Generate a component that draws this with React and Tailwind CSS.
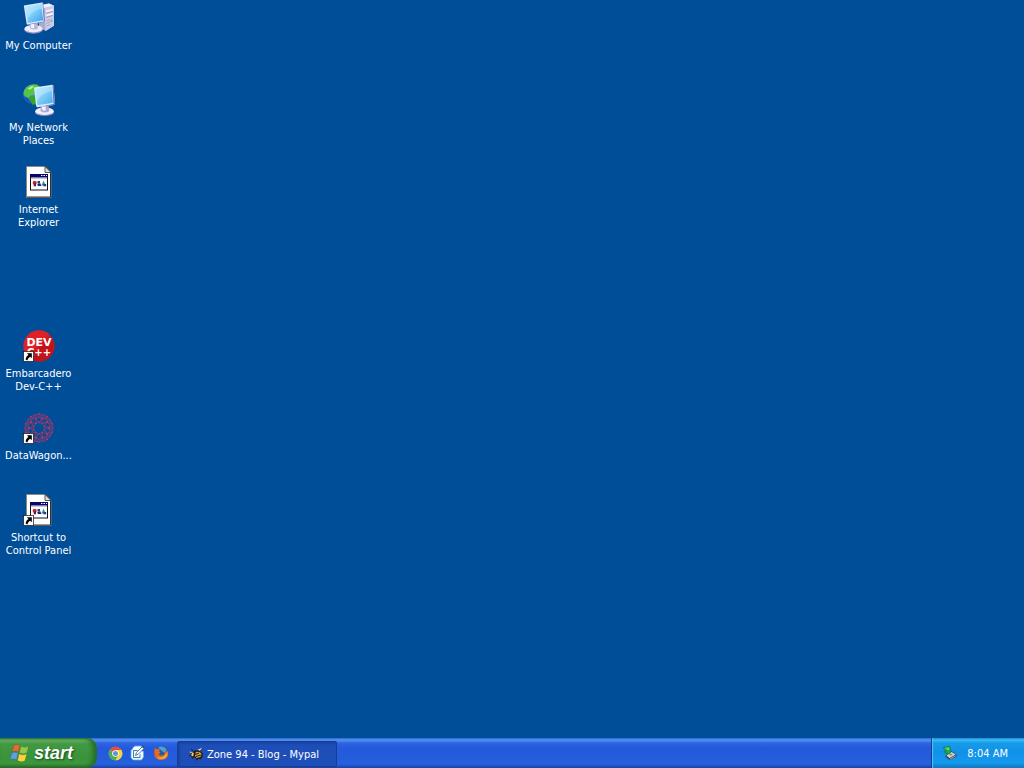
import React from "react";

const font = "font-['DejaVu_Sans_Condensed','DejaVu_Sans',sans-serif]";

function Arrow() {
  return (
    <g>
      <rect x="0.5" y="21.5" width="10" height="10" fill="#fff" stroke="#111" strokeWidth="0.7" />
      <path d="M3.9 23.300h4.900v4.900L7.200 26.700C5.600 27.700 4.800 28.800 4.500 30.400L2.600 29.500C2.900 27.400 3.900 26.100 5.500 25z" fill="#000" />
    </g>
  );
}

function ComputerIcon() {
  return (
    <svg width="32" height="32" viewBox="0 0 32 32" aria-hidden="true">
      <defs>
        <linearGradient id="pcScreen" x1="0" y1="0" x2="1" y2="1">
          <stop offset="0" stopColor="#b4eaff" />
          <stop offset="0.5" stopColor="#78cbfa" />
          <stop offset="1" stopColor="#399fe9" />
        </linearGradient>
      </defs>
      <path d="M16 3.500L26 1.500l5 2.200v20L22.500 29 16 25z" fill="#a9aace" />
      <path d="M16 3.500L26 1.500l5 2.200-9.200 2.200z" fill="#f2f1fb" />
      <path d="M21.800 5.900L31 3.700v20L22.500 29z" fill="#cecce5" />
      <path d="M23 8.500l7-1.800v2.200l-7 1.900zM23 12.500l7-1.900v2.200l-7 2z" fill="#efeffb" />
      <path d="M23 11.300l7-1.900M23 15.400l7-2" stroke="#8588b5" strokeWidth="0.8" fill="none" />
      <path d="M23.300 19l4-1.400M23.300 21.500l4-1.500M23.300 24l4-1.500" stroke="#9294bb" strokeWidth="0.7" />
      <circle cx="28.500" cy="19" r="1" fill="#78ad91" />
      <ellipse cx="10.500" cy="27.800" rx="9.300" ry="3.900" fill="#8d8fc5" />
      <ellipse cx="10.500" cy="26.700" rx="9.100" ry="3.700" fill="#eeeaf8" />
      <path d="M6.500 20l8-.5.500 7c-2 1.300-5.500 1.300-7.800 0z" fill="#b9b6dc" />
      <path d="M7.500 21l3.500-.3.200 5.500-3-.3z" fill="#f4f3ff" />
      <path d="M.8 3.500L19 .4c.7 0 1 .3 1.100 1L22 18.800c0 .8-.3 1.200-1 1.400L5 22.800c-.8 0-1.200-.3-1.400-1z" fill="#dae8f8" />
      <path d="M19.500.5l.6.900L22 18.800l-1 1.400L5 22.800l-1-.4 16.800-3z" fill="#6078b5" />
      <path d="M2.300 4.900L18.300 2l1.900 16.200L4.900 20.900z" fill="url(#pcScreen)" />
      <path d="M2.300 4.900L18.300 2l.5 4.800C13 7.500 7.800 11 4.500 17.500z" fill="#c9f2ff" opacity="0.4" />
    </svg>
  );
}

function NetworkIcon() {
  return (
    <svg width="32" height="32" viewBox="0 0 32 32" aria-hidden="true">
      <defs>
        <radialGradient id="globe" cx="0.35" cy="0.3" r="0.8">
          <stop offset="0" stopColor="#a8d8ff" />
          <stop offset="0.5" stopColor="#2f78d8" />
          <stop offset="1" stopColor="#0c3390" />
        </radialGradient>
        <linearGradient id="netScreen" x1="0" y1="0" x2="1" y2="1">
          <stop offset="0" stopColor="#b3eaff" />
          <stop offset="1" stopColor="#48aaf0" />
        </linearGradient>
      </defs>
      <circle cx="10.500" cy="10.500" r="10.300" fill="url(#globe)" />
      <path d="M1.500 6C5 .8 10 0 14 .6L17 3l-4 2-1 4-4 2-2 3-4-1-1.400-4z" fill="#55c642" />
      <path d="M6.500 12l5-1 3 2.500-1 6.800-4 .5-2.500-4.300z" fill="#31a52e" />
      <path d="M4.500 4.500L9 2l2 .7-4 3z" fill="#b4f49a" />
      <path d="M1 12c.7 3 2.500 5.500 5 7l-1-5z" fill="#1a53b5" />
      <ellipse cx="21.500" cy="28.700" rx="9.500" ry="3.200" fill="#8a88c3" />
      <ellipse cx="21.500" cy="27.200" rx="9.300" ry="3.700" fill="#f1eef9" />
      <path d="M17.500 20.500l8-.5.700 7.300c-2.400 1.600-6 1.600-8.500 0z" fill="#aaa8d4" />
      <path d="M18.500 21.500l4-.4.300 5.500-3.300-.2z" fill="#f5f2ff" />
      <path d="M11 3.600L29.500.8l1 .8 1.500 18-1 1.300L14.300 23.200l-1.200-1z" fill="#dceaf9" />
      <path d="M30.500 1.600l1.500 18-1 1.300-16.700 2.300 16.200-3.200L29.500.8z" fill="#5273b3" />
      <path d="M12.500 5L28.600 2.500l1.300 16.300L14.500 21.300z" fill="url(#netScreen)" />
      <path d="M12.500 5L28.600 2.500l.4 4.600C23.500 8 17.500 11 14.100 17z" fill="#d4f5ff" opacity="0.4" />
    </svg>
  );
}

function PageIcon({ shortcut }) {
  return (
    <svg width="32" height="32" viewBox="0 0 32 32" aria-hidden="true">
      <path d="M3.500.5h18.500l6 6V31.500H3.500z" fill="#fff" stroke="#87836f" strokeWidth="0.8" />
      <path d="M27.500 6.500V31H4" fill="none" stroke="#35332d" strokeWidth="1" />
      <path d="M22 .5v6h6z" fill="#e5e2d5" stroke="#35332d" strokeWidth="0.8" />
      <rect x="7.500" y="8.500" width="17" height="15.500" fill="#fff" stroke="#111" />
      <rect x="7" y="8" width="18" height="3.500" fill="#070767" />
      <path d="M18 9.500h1.500M20.500 9.500H22M23 9.500h1" stroke="#fff" />
      <path d="M8 12.500h16" stroke="#c8c5d0" />
      <circle cx="11.700" cy="16.800" r="2.100" fill="#d12b2b" />
      <path d="M10.800 17.300h2.200v3h-2.200z" fill="#601d46" />
      <path d="M14.500 15h2.500v2.500h-2.500z" fill="#1d3e9d" />
      <path d="M14.300 18l3-.7 1.300 2.800h-3.800z" fill="#22266f" />
      <path d="M18.500 19.500L20.500 14.500l2.300 5z" fill="#2aa173" />
      <path d="M20.300 18h2.900v2.300h-2.900z" fill="#273b9b" />
      {shortcut && <Arrow />}
    </svg>
  );
}

function DevIcon() {
  return (
    <svg width="32" height="32" viewBox="0 0 32 32" aria-hidden="true">
      <defs>
        <linearGradient id="devRed" x1="0" y1="0" x2="1" y2="1">
          <stop offset="0.45" stopColor="#df2025" />
          <stop offset="0.55" stopColor="#c2131a" />
        </linearGradient>
      </defs>
      <circle cx="16" cy="16" r="15.700" fill="url(#devRed)" />
      <text x="16" y="16" textAnchor="middle" fontFamily="DejaVu Sans, sans-serif" fontWeight="700" fontSize="11" fill="#fff">DEV</text>
      <text x="16" y="26" textAnchor="middle" fontFamily="DejaVu Sans, sans-serif" fontWeight="700" fontSize="10" fill="#fff">C++</text>
      <Arrow />
    </svg>
  );
}

function WagonIcon() {
  const spokes = [0, 36, 72, 108, 144, 180, 216, 252, 288, 324];
  return (
    <svg width="32" height="32" viewBox="0 0 32 32" aria-hidden="true">
      <g fill="none" stroke="#a93566" strokeWidth="0.7" opacity="0.85">
        <circle cx="16" cy="16" r="5.500" />
        {spokes.map((a) => (
          <g key={a} transform={`rotate(${a} 16 16)`}>
            <path d="M16 10.500L12.800 6.600 16 2l3.200 4.600zM12.800 6.600L11.700 2.500 16 2l4.300.5M12.800 6.600L16 5l3.200 1.600M12.800 11.600l0-5M11.700 2.500L16 5l4.300-2.500" />
            <circle cx="16" cy="2" r="0.800" fill="#d43b55" stroke="none" />
            <circle cx="12.800" cy="6.600" r="0.900" fill="#e33d4e" stroke="none" />
            <circle cx="16" cy="10.500" r="0.800" fill="#d43b55" stroke="none" />
          </g>
        ))}
      </g>
      <Arrow />
    </svg>
  );
}

function WindowsFlag() {
  return (
    <svg width="20" height="20" viewBox="0 0 20 20" aria-hidden="true">
      <g stroke="#24602a" strokeWidth="0.3">
        <path d="M3.800 2.500C6 1 8 1 9.900 2.500L8.300 9C6.300 7.700 4.200 7.900 2 9.200z" fill="#f26532" />
        <path d="M10.900 3.100c2.600 1.500 5 1.500 7.800 0l-1.700 6.700c-2.600 1.500-5 1.300-7.700-.1z" fill="#91ca48" />
        <path d="M1.700 10.100c2.500-1.300 4.500-1.300 6.500 0L6.500 17c-2.200-1.400-4.300-1.300-6.500 0z" fill="#609ced" />
        <path d="M9.100 10.700c2.600 1.500 5 1.500 7.700 0L15 17.700c-2.600 1.500-5 1.300-7.600-.1z" fill="#fbd43b" />
      </g>
    </svg>
  );
}

function ChromeIcon() {
  return (
    <svg width="16" height="16" viewBox="0 0 16 16" aria-hidden="true">
      <circle cx="8.500" cy="8.500" r="6.800" fill="#f8d346" />
      <path d="M8.500 8.500L2.600 5.100A6.800 6.800 0 0 1 14.400 5.100z" fill="#e54b3f" />
      <path d="M8.500 8.500L2.600 5.100A6.800 6.800 0 0 0 8.500 15.300l3-5.300z" fill="#4aad58" />
      <path d="M8.500 5.100h5.900A6.800 6.800 0 0 1 8.500 15.300l3-5.200z" fill="#f8d346" />
      <circle cx="8.500" cy="8.500" r="3.300" fill="#fff" />
      <circle cx="8.500" cy="8.500" r="2.500" fill="#6193d9" />
    </svg>
  );
}

function ShowDesktopIcon() {
  return (
    <svg width="16" height="16" viewBox="0 0 16 16" aria-hidden="true">
      <path d="M3 2.500L5 1h6l1 1.500-1 3 2.500 1V12l-2 3H3l-2-2.500v-7L2.500 4z" fill="#f4fbff" stroke="#62a9e5" strokeWidth="0.8" />
      <path d="M3.500 5.500h4M3.500 5.500v7h6.500V9.500" fill="none" stroke="#397caf" />
      <path d="M5.500 10.500l1-3L12.500 1.500l2 1.500-6 6z" fill="#fff" stroke="#27618e" strokeWidth="0.8" />
      <path d="M12 1.500l2.500 1.800" stroke="#184d80" strokeWidth="1.300" />
    </svg>
  );
}

function FirefoxIcon() {
  return (
    <svg width="16" height="16" viewBox="0 0 16 16" aria-hidden="true">
      <circle cx="8.500" cy="8" r="6.800" fill="#235b9e" />
      <path d="M5 2.500C8 .5 12 2 13.500 4.500L12 8 9 6z" fill="#4aa2cd" />
      <path d="M2 2.700l2 1.800c1.500-.7 2.500-.4 3 .4L6 6.500 7.500 7.800 5.700 9c.8 1.700 3 2 4.700 1 2.100-1.200 2.300-3.400 2.100-5.300 1 1 1.100 1.800 1.100 2.500l1-1.600c2 5.100-1 9.300-6 9.300C2.700 14.900.4 10.800 1.200 6.500z" fill="#e46c20" />
      <path d="M14.200 7c.8 4-2 7-5.700 7-2.400 0-4.500-1.200-5.500-3 2 1.800 5.500 2 7.500.5 2-1.500 3-2.800 3.700-4.500z" fill="#f1b047" />
      <path d="M2 4L1.500 8c.8 4 3.500 5.400 6 5.800C4 13.300.8 9.500 2 4z" fill="#b3361f" />
    </svg>
  );
}

function MypalIcon() {
  return (
    <svg width="16" height="16" viewBox="0 0 16 16" aria-hidden="true">
      <path d="M4 6.500L7 4l2 1 2-2.500 3 1-1.500 2L15 7.500 14 12l-5 1.500-3-2.500-3 .5z" fill="#211b19" />
      <path d="M7.500 6.500c2-1.300 4.500-.5 6 1.500L12.500 11l-4 1-1.500-2z" fill="#e3ad43" />
      <path d="M7 8.500l4-1.500M7.800 10.500l5-1.500" stroke="#261c18" strokeWidth="1.200" fill="none" />
      <path d="M2 5.500l4 1.500-1 1.500-4-1zM9.500 3.500L14 2l-2 3z" fill="#ddd3c2" />
      <path d="M1 7l3 .5M1 10l3-1M4 13l2-2.500M9 14.500l-.5-2M13 13.500l-1-2M5 4.500L3 3" stroke="#171b2e" />
      <circle cx="4.500" cy="9" r="1.200" fill="#eec36d" />
    </svg>
  );
}

function SafelyRemoveIcon() {
  return (
    <svg width="16" height="16" viewBox="0 0 16 16" aria-hidden="true">
      <path d="M3.500 10.500L9.500 6l5 3.500v2L7.500 15l-4-3z" fill="#354b54" />
      <path d="M4.500 10.500L9.500 7l4 2.500L7.500 13z" fill="#d9dcd5" />
      <path d="M7 10l2.500-1.500 1.500 1L8.500 11z" fill="#849293" />
      <path d="M8 14l5.500-3.200" stroke="#b9c2c0" strokeWidth="0.800" />
      <path d="M1 2.500L7.500 1.500 9 6.500 7.500 9 3.500 8.500 2 6.500l2.500-.5z" fill="#20a846" stroke="#167548" strokeWidth="0.700" />
      <path d="M2.500 3l4.500-.7.700 2.500-2 .5z" fill="#54dc69" />
    </svg>
  );
}

const shortcuts = [
  { label: "My Computer", icon: <ComputerIcon /> },
  { label: "My Network Places", icon: <NetworkIcon /> },
  { label: "Internet Explorer", icon: <PageIcon /> },
  null,
  { label: "Embarcadero Dev-C++", icon: <DevIcon /> },
  { label: "DataWagon...", icon: <WagonIcon /> },
  { label: "Shortcut to Control Panel", icon: <PageIcon shortcut /> },
];

const quickLaunch = [
  { label: "Google Chrome", icon: <ChromeIcon /> },
  { label: "Show Desktop", icon: <ShowDesktopIcon /> },
  { label: "Mozilla Firefox", icon: <FirefoxIcon /> },
];

export default function App() {
  return (
    <div className={`flex min-h-screen flex-col bg-[#004e98] text-[11px] leading-[13px] text-white ${font}`}>
      <main className="flex-1">
        <ul className="grid w-[77px] auto-rows-[82px]">
          {shortcuts.map((item, i) => (
            <li key={i}>
              {item && (
                <button type="button" className="flex w-full flex-col items-center gap-[5px] pt-[2px]">
                  {item.icon}
                  <span className="text-center">{item.label}</span>
                </button>
              )}
            </li>
          ))}
        </ul>
      </main>
      <footer className="flex h-[30px] items-stretch bg-[linear-gradient(to_bottom,#2867cf_0px,#5594f4_2px,#2e65e2_5px,#2459dc_10px,#245ddb_22px,#2562df_26px,#1941a5_30px)]">
        <button
          type="button"
          className="flex w-[97px] items-center gap-[4px] rounded-r-[10px] bg-[linear-gradient(to_bottom,#348039_0px,#6bb46b_2px,#429942_6px,#38933a_20px,#3d983d_26px,#25672a_30px)] pl-[10px] shadow-[inset_-4px_0_5px_#256a29]"
        >
          <WindowsFlag />
          <span className="font-['Liberation_Sans',sans-serif] text-[18px] leading-[24px] font-bold italic [text-shadow:1px_1px_2px_#174b1a]">start</span>
        </button>
        <nav aria-label="Quick launch" className="flex w-[80px] items-center gap-[7px] pl-[10px]">
          {quickLaunch.map((item) => (
            <button type="button" key={item.label} aria-label={item.label}>{item.icon}</button>
          ))}
        </nav>
        <div className="flex flex-1 pt-[3px] pb-[1px]">
          <button
            type="button"
            className="flex w-[160px] items-center gap-[3px] rounded-[2px] border border-[#173d91] bg-[#1e4fb9] pl-[10px] shadow-[inset_2px_2px_2px_#1944a2]"
          >
            <MypalIcon />
            <span>Zone 94 - Blog - Mypal</span>
          </button>
        </div>
        <div className="flex w-[93px] items-center justify-between border-l border-[#103f96] bg-[linear-gradient(to_bottom,#1684d5_0px,#38bdf5_2px,#179be9_5px,#1290e8_14px,#149aee_25px,#1370b8_30px)] pr-[16px] pl-[10px] shadow-[inset_1px_0_1px_#4bc6f5]">
          <button type="button" aria-label="Safely Remove Hardware"><SafelyRemoveIcon /></button>
          <time dateTime="08:04">8:04 AM</time>
        </div>
      </footer>
    </div>
  );
}
